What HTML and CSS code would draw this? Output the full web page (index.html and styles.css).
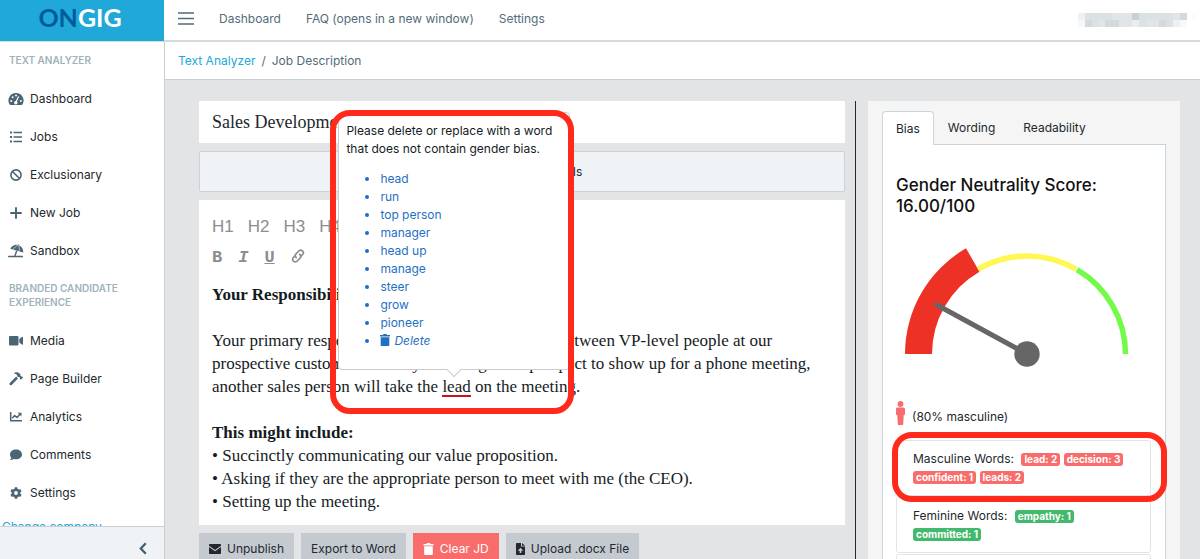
FILE: index.html
```html
<!DOCTYPE html>
<html lang="en">
<head>
    <meta charset="UTF-8">
    <meta name="viewport" content="width=device-width, initial-scale=1.0">
    <title>Ongig - Text Analyzer</title>
    <link rel="stylesheet" href="styles.css">
</head>
<body>
    <header class="header">
        <a class="brand" href="#"><span>ON</span>GIG</a>
        <nav class="header-nav">
            <button class="menu-button" aria-label="Toggle sidebar">
                <svg width="16" height="13" viewBox="0 0 16 13"><path d="M0 1h16M0 6.500h16M0 12h16" stroke="#536c79" stroke-width="1.300"/></svg>
            </button>
            <a href="#">Dashboard</a>
            <a href="#">FAQ (opens in a new window)</a>
            <a href="#">Settings</a>
        </nav>
        <svg class="user" width="118" height="14" viewBox="0 0 118 14" aria-hidden="true">
            <path fill="#eef1f2" d="M0 0h7v7H0zM95 7h7v7h-7z"/>
            <path fill="#f7f8f9" d="M0 7h7v7H0zM102 7h7v7h-7zM115 1h2v5h-2z"/>
            <path fill="#dce1e4" d="M7 0h27v7H7zM61 0h34v7H61zM14 7h13v7H14zM61 7h7v7h-7zM88 7h7v7h-7z"/>
            <path fill="#e1e5e8" d="M34 0h20v7H34zM20 7h14v7H20zM41 7h13v7H41zM68 7h13v7H68zM95 0h7v7h-7z"/>
            <path fill="#d3d9dc" d="M7 7h7v7H7zM27 7h14v7H27zM81 7h7v7h-7zM102 0h7v7h-7z"/>
            <path fill="#c8d1d7" d="M54 0h7v7h-7z"/>
            <path fill="#e9edef" d="M54 7h7v7h-7z"/>
        </svg>
    </header>

    <div class="app-body">
        <aside class="sidebar">
            <nav class="sidebar-nav">
                <h2 class="nav-title">TEXT ANALYZER</h2>
                <a class="nav-link" href="#">
                    <svg class="icon" viewBox="0 0 16 14"><path fill="currentColor" d="M8 1a7.500 7.500 0 0 0-6.500 11.300c.2.400.5.700 1 .7h11c.5 0 .8-.3 1-.7A7.500 7.500 0 0 0 8 1z"/><g fill="#fff"><circle cx="3.200" cy="9" r="1"/><circle cx="4.700" cy="5.200" r="1"/><circle cx="8" cy="3.500" r="1"/><circle cx="12.800" cy="9" r="1"/></g><path d="M7.800 10.500 10.600 4.500" stroke="#fff" stroke-width="1.200"/><circle cx="7.800" cy="10.700" r="1.700" fill="#fff"/></svg>
                    Dashboard
                </a>
                <a class="nav-link" href="#">
                    <svg class="icon" viewBox="0 0 16 14"><path fill="currentColor" d="M2 1.500h2v2H2zM2 6h2v2H2zM2 10.500h2v2H2zM5.500 1.700H14v1.600H5.500zM5.500 6.200H14v1.600H5.500zM5.500 10.700H14v1.600H5.500z"/></svg>
                    Jobs
                </a>
                <a class="nav-link" href="#">
                    <svg class="icon" viewBox="0 0 16 14"><circle cx="8" cy="7" r="5.100" fill="none" stroke="currentColor" stroke-width="1.600"/><path d="m4.500 3.500 7 7" stroke="currentColor" stroke-width="1.600"/></svg>
                    Exclusionary
                </a>
                <a class="nav-link" href="#">
                    <svg class="icon" viewBox="0 0 16 14"><path d="M8 2v10M3 7h10" stroke="currentColor" stroke-width="1.900" stroke-linecap="round"/></svg>
                    New Job
                </a>
                <a class="nav-link" href="#">
                    <svg class="icon" viewBox="0 0 16 14"><path fill="currentColor" d="M2.300 4.700C4 1.700 7 .4 10 1l.3-.8.9.3-.3.800c3 1.300 4.700 4.200 4.300 7.300z"/><path d="M5.200 5.600C6.300 3.600 8 2 10.300 1.300c1.200 1.400 1.300 3.600.8 6" fill="none" stroke="#fff" stroke-width=".6"/><path d="M8.700 6.800 6.900 12" stroke="currentColor" stroke-width="1.400"/><path fill="currentColor" d="M1 11.700h13c.8 0 1 .5 1 1.500H0c0-1 .3-1.500 1-1.500z"/></svg>
                    Sandbox
                </a>
                <h2 class="nav-title">BRANDED CANDIDATE EXPERIENCE</h2>
                <a class="nav-link" href="#">
                    <svg class="icon" viewBox="0 0 16 14"><rect x="1" y="2" width="9.500" height="9.500" rx="1" fill="currentColor"/><path fill="currentColor" d="m11.300 5 2.500-2c.6-.4 1.200-.1 1.200.5V10c0 .6-.6.900-1.200.5l-2.500-2z"/></svg>
                    Media
                </a>
                <a class="nav-link" href="#">
                    <svg class="icon" viewBox="0 0 16 14"><path fill="currentColor" d="M5.800 1.500C7.500-.1 10 0 11.500 1.500l1 1-.1 1.200 1 .9.800-.1.900.9-2.200 2.300-1-1 .1-.9-1-.9-1 .1-.8-.8V3c-.8-.9-1.800-1.400-3.400-1.500zM8.200 4.600l1.800 1.800-6.400 6.500c-1.200 1-2.800-.6-1.800-1.800z"/></svg>
                    Page Builder
                </a>
                <a class="nav-link" href="#">
                    <svg class="icon" viewBox="0 0 16 14"><path d="M2.700 2v8.800H14" fill="none" stroke="currentColor" stroke-width="1.500"/><path d="m4.300 8.200 2.300-2.700 2.400 2L12.200 4" fill="none" stroke="currentColor" stroke-width="1.500"/><path fill="currentColor" d="M9.700 2.700h3.800v3.800z"/></svg>
                    Analytics
                </a>
                <a class="nav-link" href="#">
                    <svg class="icon" viewBox="0 0 16 14"><path fill="currentColor" d="M8 1.500c3.300 0 6 2.100 6 4.900s-2.700 4.900-6 4.900c-.9 0-1.700-.1-2.500-.4-.9.700-2 1.200-3.500 1.200.7-.7 1.100-1.500 1.300-2.300A4.400 4.400 0 0 1 2 6.400c0-2.800 2.700-4.900 6-4.900z"/></svg>
                    Comments
                </a>
                <a class="nav-link" href="#">
                    <svg class="icon" viewBox="0 0 16 14"><path d="M8 1.200v11.600M3 4.100l10 5.800M3 9.900l10-5.800" stroke="currentColor" stroke-width="2.600"/><circle cx="8" cy="7" r="3.200" fill="#fff" stroke="currentColor" stroke-width="2.600"/></svg>
                    Settings
                </a>
                <a class="company-link" href="#">Change company</a>
            </nav>
            <button class="sidebar-minimizer" aria-label="Collapse sidebar">
                <svg width="8" height="13" viewBox="0 0 8 13"><path d="M6.800 1.200 1.800 6.500l5 5.300" fill="none" stroke="#42606f" stroke-width="2.300"/></svg>
            </button>
        </aside>

        <main class="main">
            <div class="breadcrumb">
                <a href="#">Text Analyzer</a>
                <span>/</span>
                <span>Job Description</span>
            </div>

            <div class="content">
                <section class="editor-column">
                    <input class="job-title" type="text" value="Sales Development Rep" aria-label="Job title">
                    <button class="words-button">Show Flagged Words</button>

                    <div class="editor">
                        <div class="toolbar">
                            <button>H1</button>
                            <button>H2</button>
                            <button>H3</button>
                            <button>H4</button>
                        </div>
                        <div class="toolbar toolbar-format">
                            <button>B</button>
                            <button class="format-italic">I</button>
                            <button class="format-underline">U</button>
                            <button aria-label="Link">
                                <svg width="14" height="14" viewBox="0 0 14 14" fill="none" stroke="#8d8d8d" stroke-width="1.700" stroke-linecap="round"><path d="M5.200 8.600C4 7.400 4 5.900 5 4.900L7.800 2c1.100-1.100 2.700-1.100 3.700-.2 1.100 1.100 1.100 2.600.1 3.700L10 7.100"/><path d="M8.800 5.400c1.200 1.200 1.200 2.700.2 3.700L6.200 12c-1.100 1.100-2.700 1.100-3.700.2-1.100-1.100-1.100-2.600-.1-3.700L4 6.900"/></svg>
                            </button>
                        </div>
                        <div class="editor-text">
                            <h3>Your Responsibilities:</h3>
                            <p>
                                Your primary responsibility is to arrange meetings between VP-level people at our<br>
                                prospective customers. Once you have got the prospect to show up for a phone meeting,<br>
                                another sales person will take the
                                <span class="flagged">lead<span class="popover">
                                    <span class="popover-text">Please delete or replace with a word that does not contain gender bias.</span>
                                    <span class="suggestions" role="list">
                                        <a role="listitem" href="#">head</a>
                                        <a role="listitem" href="#">run</a>
                                        <a role="listitem" href="#">top person</a>
                                        <a role="listitem" href="#">manager</a>
                                        <a role="listitem" href="#">head up</a>
                                        <a role="listitem" href="#">manage</a>
                                        <a role="listitem" href="#">steer</a>
                                        <a role="listitem" href="#">grow</a>
                                        <a role="listitem" href="#">pioneer</a>
                                        <a role="listitem" href="#"><svg width="10" height="12" viewBox="0 0 10 12"><path fill="currentColor" d="M0 1h3l.5-1h3L7 1h3v1.400H0zM.7 3.200h8.600V11c0 .6-.4 1-1 1H1.700c-.6 0-1-.4-1-1z"/></svg><em>Delete</em></a>
                                    </span>
                                </span><span class="highlight highlight-popover"></span></span>
                                on the meeting.
                            </p>
                            <h3>This might include:</h3>
                            <p>
                                • Succinctly communicating our value proposition.<br>
                                • Asking if they are the appropriate person to meet with me (the CEO).<br>
                                • Setting up the meeting.
                            </p>
                        </div>
                    </div>

                    <div class="actions">
                        <button class="btn">
                            <svg width="12" height="10" viewBox="0 0 12 10"><path fill="currentColor" d="M1 0h10c.6 0 1 .4 1 1v.7L6 6 0 1.700V1c0-.6.4-1 1-1zM0 3l6 4.200L12 3v6c0 .6-.4 1-1 1H1c-.6 0-1-.4-1-1z"/></svg>
                            Unpublish
                        </button>
                        <button class="btn">Export to Word</button>
                        <button class="btn btn-danger">
                            <svg width="11" height="12" viewBox="0 0 10 12"><path fill="currentColor" d="M0 1h3l.5-1h3L7 1h3v1.400H0zM.7 3.200h8.600V11c0 .6-.4 1-1 1H1.700c-.6 0-1-.4-1-1z"/></svg>
                            Clear JD
                        </button>
                        <button class="btn">
                            <svg width="9" height="12" viewBox="0 0 9 12"><path fill="currentColor" d="M.7 0H5v3.500h4v7.800c0 .4-.3.700-.7.700H.7c-.4 0-.7-.3-.7-.7V.7C0 .3.300 0 .7 0zM6 0l3 2.700H6z"/><path fill="#c5cad1" d="M4.500 4.800 7.300 7.700H5.300V10H3.700V7.700h-2z"/></svg>
                            Upload .docx File
                        </button>
                    </div>
                </section>

                <aside class="score-panel">
                    <div class="tabs" role="tablist">
                        <button class="tab active" role="tab" aria-selected="true">Bias</button>
                        <button class="tab" role="tab">Wording</button>
                        <button class="tab" role="tab">Readability</button>
                    </div>
                    <div class="tab-content">
                        <h1>Gender Neutrality Score: 16.00/100</h1>
                        <svg class="gauge" width="256" height="168" viewBox="0 0 256 168" role="img" aria-label="Score 16 out of 100">
                            <path fill="#ed3124" d="M9 122a122 122 0 0 1 61-105.700l13.500 23.400A95 95 0 0 0 36 122z"/>
                            <path fill="none" stroke="#fff752" stroke-width="5.500" d="M82 37.100a98 98 0 0 1 98 0"/>
                            <path fill="none" stroke="#72fb48" stroke-width="5.500" d="M181 37.700A98 98 0 0 1 229.500 122"/>
                            <path stroke="#666" stroke-width="5" stroke-linecap="round" d="M131 122 41 73"/>
                            <circle cx="131" cy="122" r="12.700" fill="#666"/>
                        </svg>
                        <div class="ratio">
                            <svg width="9" height="24" viewBox="0 0 9 24"><circle cx="4.500" cy="3" r="2.900" fill="#f76c6c"/><path fill="#f76c6c" d="M1.600 6.600h5.800C8.400 6.600 9 7.200 9 8.200V13c0 .7-.4 1.100-1.300 1.200L7.200 23c0 .6-.3 1-.9 1H2.700c-.6 0-.9-.4-.9-1l-.5-8.800C.4 14.100 0 13.700 0 13V8.200c0-1 .6-1.600 1.600-1.600z"/></svg>
                            <span>(80% masculine)</span>
                        </div>
                        <div class="word-card">
                            <span class="word-label">Masculine Words:</span>
                            <span class="badge">lead: 2</span>
                            <span class="badge">decision: 3</span>
                            <span class="badge">confident: 1</span>
                            <span class="badge">leads: 2</span>
                            <div class="highlight highlight-card"></div>
                        </div>
                        <div class="word-card">
                            <span class="word-label">Feminine Words:</span>
                            <span class="badge badge-success">empathy: 1</span>
                            <span class="badge badge-success">committed: 1</span>
                        </div>
                        <div class="word-card"></div>
                    </div>
                </aside>
            </div>
        </main>
    </div>
</body>
</html>
```
FILE: styles.css
```css
* {
    box-sizing: border-box;
}

body {
    display: flex;
    flex-direction: column;
    height: 100vh;
    margin: 0;
    overflow: hidden;
    font-family: Inter, "Liberation Sans", sans-serif;
    font-size: 12px;
    line-height: 18px;
    color: #23282c;
    background: #e3e4e6;
}

a {
    color: inherit;
    text-decoration: none;
}

button,
input {
    font: inherit;
    color: inherit;
    margin: 0;
}

button {
    cursor: pointer;
}

svg {
    flex: none;
}

.header {
    display: flex;
    flex: none;
    height: 42px;
    border-bottom: 2px solid #d5dce1;
    background: #ffffff;
}

.brand {
    width: 164px;
    height: 41px;
    padding-right: 4px;
    background: #20a8d8;
    color: #ffffff;
    font-family: Lato, sans-serif;
    font-size: 25px;
    font-weight: 700;
    line-height: 34px;
    text-align: center;
}

.brand span {
    color: #005b9c;
}

.header-nav {
    display: flex;
    flex: 1;
    align-items: center;
    gap: 25px;
    padding: 0 14px 3px;
    color: #536c79;
}

.menu-button {
    display: flex;
    padding: 0;
    border: none;
    background: none;
}

.user {
    margin: 13px 4px 0 0;
}

.app-body {
    display: flex;
    flex: 1;
    min-height: 0;
}

.sidebar {
    display: flex;
    flex: none;
    flex-direction: column;
    width: 165px;
    border-right: 1px solid #c8ced3;
    background: #ffffff;
}

.sidebar-nav {
    flex: 1;
    min-height: 0;
    overflow: hidden;
}

.nav-title {
    margin: 0;
    padding: 11px 9px 13px;
    font-size: 10px;
    font-weight: 600;
    line-height: 14px;
    color: #a0b3bc;
}

.nav-link {
    display: flex;
    align-items: center;
    gap: 6px;
    height: 38px;
    padding-left: 8px;
}

.icon {
    width: 16px;
    height: 14px;
    color: #4a6574;
}

.company-link {
    display: block;
    padding: 6px 2px;
    color: #20a8d8;
}

.sidebar-minimizer {
    display: flex;
    flex: none;
    align-items: center;
    justify-content: flex-end;
    height: 33px;
    padding: 10px 17px 0;
    border: none;
    border-top: 1px solid #c8ced3;
    background: #f0f3f5;
}

.main {
    display: flex;
    flex: 1;
    flex-direction: column;
    min-width: 0;
}

.breadcrumb {
    display: flex;
    flex: none;
    align-items: center;
    gap: 6px;
    height: 38px;
    padding: 0 13px;
    border-bottom: 1px solid #c8ced3;
    background: #ffffff;
    color: #536c79;
}

.breadcrumb a {
    color: #20a8d8;
}

.content {
    display: grid;
    flex: 1;
    grid-template-columns: 657fr 312fr;
    gap: 12px;
    min-height: 0;
    padding: 21px 20px 0 34px;
    overflow: hidden;
}

.editor-column {
    display: flex;
    flex-direction: column;
    gap: 8px;
    min-width: 0;
    padding-right: 10px;
    border-right: 1px solid #23282c;
}

.job-title {
    flex: none;
    width: 100%;
    height: 42px;
    padding: 0 13px;
    border: none;
    background: #ffffff;
    font-family: "Liberation Serif", serif;
    font-size: 18px;
}

.words-button {
    flex: none;
    height: 41px;
    border: 1px solid #c8d2da;
    border-radius: 2px;
    background: #eff3f6;
}

.editor {
    flex: none;
    padding: 15px 13px 12px;
    background: #ffffff;
}

.toolbar {
    display: flex;
    align-items: center;
    gap: 14px;
    height: 24px;
    margin-bottom: 7px;
    color: #8d8d8d;
}

.toolbar button {
    padding: 0;
    border: none;
    background: none;
    font-family: "Liberation Sans", sans-serif;
    font-size: 17px;
}

.toolbar-format {
    gap: 16px;
    margin-bottom: 13px;
}

.toolbar-format button {
    font-family: "Liberation Mono", monospace;
    font-weight: 700;
}

.toolbar .format-italic {
    font-style: italic;
}

.toolbar .format-underline {
    text-decoration: underline;
}

.editor-text {
    font-family: "Liberation Serif", serif;
    font-size: 17px;
    line-height: 23px;
    color: #151b1e;
}

.editor-text h3 {
    margin: 0;
    font-size: 17px;
}

.editor-text p {
    margin: 0;
    white-space: nowrap;
}

.editor-text h3 + p:not(:last-child) {
    margin: 23px 0;
}

.flagged {
    display: inline-block;
    position: relative;
    height: 22px;
    border-bottom: 2px solid #c8141c;
}

.popover {
    position: absolute;
    bottom: 25px;
    left: -104px;
    width: 232px;
    height: 258px;
    padding: 9px 7px;
    border: 1px solid #cccccc;
    border-radius: 4px;
    background: #ffffff;
    font-family: Inter, "Liberation Sans", sans-serif;
    font-size: 12px;
    line-height: 18px;
    white-space: normal;
}

.popover::after {
    content: "";
    position: absolute;
    bottom: -6px;
    left: 50%;
    width: 10px;
    height: 10px;
    border: solid #cccccc;
    border-width: 0 1px 1px 0;
    transform: translateX(-50%) rotate(45deg);
    background: #ffffff;
}

.popover-text {
    display: block;
    margin-bottom: 12px;
}

.suggestions {
    display: block;
    padding-left: 34px;
    color: #1f6fc4;
}

.suggestions a {
    display: list-item;
    list-style: disc;
}

.suggestions svg {
    margin-right: 4px;
    vertical-align: -1px;
}

.highlight {
    position: absolute;
    z-index: 2;
    border: 6px solid #ff2a1b;
    border-radius: 20px;
    pointer-events: none;
}

.highlight-popover {
    top: -265px;
    left: -112px;
    width: 244px;
    height: 304px;
}

.highlight-card {
    inset: -9px -17px -7px -5px;
}

.actions {
    display: flex;
    gap: 7px;
}

.btn {
    display: flex;
    align-items: center;
    gap: 6px;
    height: 32px;
    padding: 0 10px;
    border: none;
    background: #c5cad1;
    white-space: nowrap;
}

.btn-danger {
    background: #f86c6b;
    color: #ffffff;
}

.score-panel {
    min-width: 0;
    padding: 10px 14px 0;
    background: #f5f5f5;
}

.tabs {
    display: flex;
    align-items: flex-start;
    height: 33px;
}

.tab {
    height: 33px;
    padding: 0 13px;
    border: 1px solid transparent;
    border-bottom: none;
    background: none;
}

.tab.active {
    position: relative;
    z-index: 1;
    height: 34px;
    border-color: #c8d5dd;
    border-radius: 4px 4px 0 0;
    background: #ffffff;
}

.tab-content {
    height: 100%;
    padding: 30px 14px 0 13px;
    border: 1px solid #c8d5dd;
    background: #ffffff;
}

.tab-content h1 {
    margin: 0 0 15px;
    font-size: 17px;
    font-weight: 500;
    line-height: 21px;
    color: #111111;
}

.gauge {
    display: block;
}

.ratio {
    display: flex;
    align-items: center;
    gap: 7px;
    margin-bottom: 14px;
}

.ratio span {
    padding-top: 8px;
}

.word-card {
    position: relative;
    min-height: 56px;
    margin-bottom: 1px;
    padding: 9px 16px;
    border: 1px solid #e1e5e8;
    border-radius: 3px;
}

.word-label {
    margin-right: 4px;
}

.badge {
    display: inline-block;
    padding: 0 3px;
    border-radius: 3px;
    background: #f86c6b;
    color: #ffffff;
    font-size: 10px;
    font-weight: 700;
    line-height: 13px;
}

.badge-success {
    background: #42b96c;
}
```
